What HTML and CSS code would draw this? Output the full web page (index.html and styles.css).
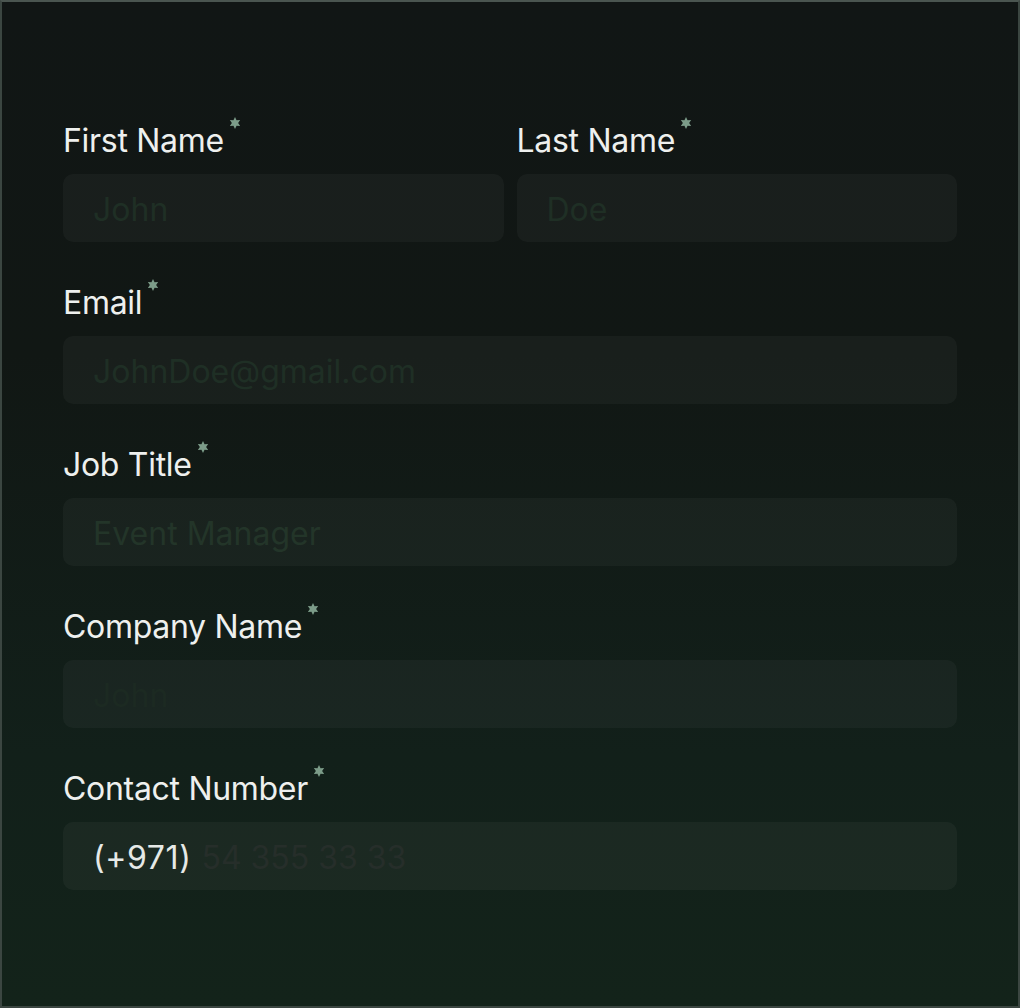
FILE: index.html
```html
<!DOCTYPE html>
<html>
<head>
    <title>Contact Details</title>
    <link rel="stylesheet" href="styles.css">
</head>
<body>
    <form class="card" id="contactForm">
        <div class="row">
            <div class="field">
                <label for="firstName">First Name<svg class="req" viewBox="0 0 10 10"><polygon points="5,0 6.3,2.7 9.3,2.5 7.6,5 9.3,7.5 6.3,7.3 5,10 3.7,7.3 0.7,7.5 2.4,5 0.7,2.5 3.7,2.7"/></svg></label>
                <input type="text" id="firstName" placeholder="John">
            </div>
            <div class="field">
                <label for="lastName">Last Name<svg class="req" viewBox="0 0 10 10"><polygon points="5,0 6.3,2.7 9.3,2.5 7.6,5 9.3,7.5 6.3,7.3 5,10 3.7,7.3 0.7,7.5 2.4,5 0.7,2.5 3.7,2.7"/></svg></label>
                <input type="text" id="lastName" placeholder="Doe">
            </div>
        </div>
        <div class="field">
            <label for="email">Email<svg class="req" viewBox="0 0 10 10"><polygon points="5,0 6.3,2.7 9.3,2.5 7.6,5 9.3,7.5 6.3,7.3 5,10 3.7,7.3 0.7,7.5 2.4,5 0.7,2.5 3.7,2.7"/></svg></label>
            <input type="text" id="email" placeholder="JohnDoe@gmail.com">
        </div>
        <div class="field">
            <label for="jobTitle">Job Title<svg class="req" viewBox="0 0 10 10"><polygon points="5,0 6.3,2.7 9.3,2.5 7.6,5 9.3,7.5 6.3,7.3 5,10 3.7,7.3 0.7,7.5 2.4,5 0.7,2.5 3.7,2.7"/></svg></label>
            <input type="text" id="jobTitle" placeholder="Event Manager">
        </div>
        <div class="field">
            <label for="company">Company Name<svg class="req" viewBox="0 0 10 10"><polygon points="5,0 6.3,2.7 9.3,2.5 7.6,5 9.3,7.5 6.3,7.3 5,10 3.7,7.3 0.7,7.5 2.4,5 0.7,2.5 3.7,2.7"/></svg></label>
            <input type="text" id="company" class="faint" placeholder="John">
        </div>
        <div class="field">
            <label for="phone">Contact Number<svg class="req" viewBox="0 0 10 10"><polygon points="5,0 6.3,2.7 9.3,2.5 7.6,5 9.3,7.5 6.3,7.3 5,10 3.7,7.3 0.7,7.5 2.4,5 0.7,2.5 3.7,2.7"/></svg></label>
            <div class="phone">
                <span class="prefix">(+971)</span>
                <input type="text" id="phone" placeholder="54 355 33 33">
            </div>
        </div>
    </form>
</body>
</html>
```

FILE: styles.css
```css
html, body {
    margin: 0;
    padding: 0;
    height: 100%;
}
body {
    font-family: Inter, "Noto Sans", sans-serif;
    background-color: #111615;
}
.card {
    box-sizing: border-box;
    height: 1008px;
    padding: 121px 61px 0 61px;
    border: 2px solid #3b4641;
    border-top-color: #4a5550;
    background: linear-gradient(180deg, #111615 0%, #111714 35%, #12201a 75%, #13231a 100%);
}
.row {
    display: flex;
    gap: 13px;
}
.row .field {
    flex: 1;
}
.field {
    margin-bottom: 43px;
}
label {
    display: block;
    height: 36px;
    margin-bottom: 15px;
    font-size: 32px;
    line-height: 36px;
    color: #eef0ee;
    letter-spacing: -0.3px;
}
.req {
    width: 12px;
    height: 12px;
    fill: #7c9c89;
    vertical-align: top;
    margin-left: 5px;
    margin-top: -6px;
}
input[type="text"] {
    display: block;
    width: 100%;
    height: 68px;
    box-sizing: border-box;
    padding: 2px 30px 0 30px;
    border: none;
    border-radius: 10px;
    background-color: rgba(255, 255, 255, 0.035);
    font-family: Inter, "Noto Sans", sans-serif;
    font-size: 32px;
    color: #eef0ee;
    outline: none;
}
input::placeholder {
    color: #1f2f25;
}
#jobTitle::placeholder {
    color: #233529;
}
.faint::placeholder {
    color: #1c2a22;
}
.phone {
    display: flex;
    align-items: center;
    height: 68px;
    border-radius: 10px;
    background-color: rgba(255, 255, 255, 0.04);
    padding-left: 30px;
}
.prefix {
    font-size: 32px;
    letter-spacing: 0.6px;
    color: #e6e9e7;
    margin-right: 10px;
    padding-top: 2px;
}
.phone input[type="text"] {
    background: transparent;
    padding: 2px 0 0 0;
    flex: 1;
}
.phone input::placeholder {
    color: #262e2a;
}
```
